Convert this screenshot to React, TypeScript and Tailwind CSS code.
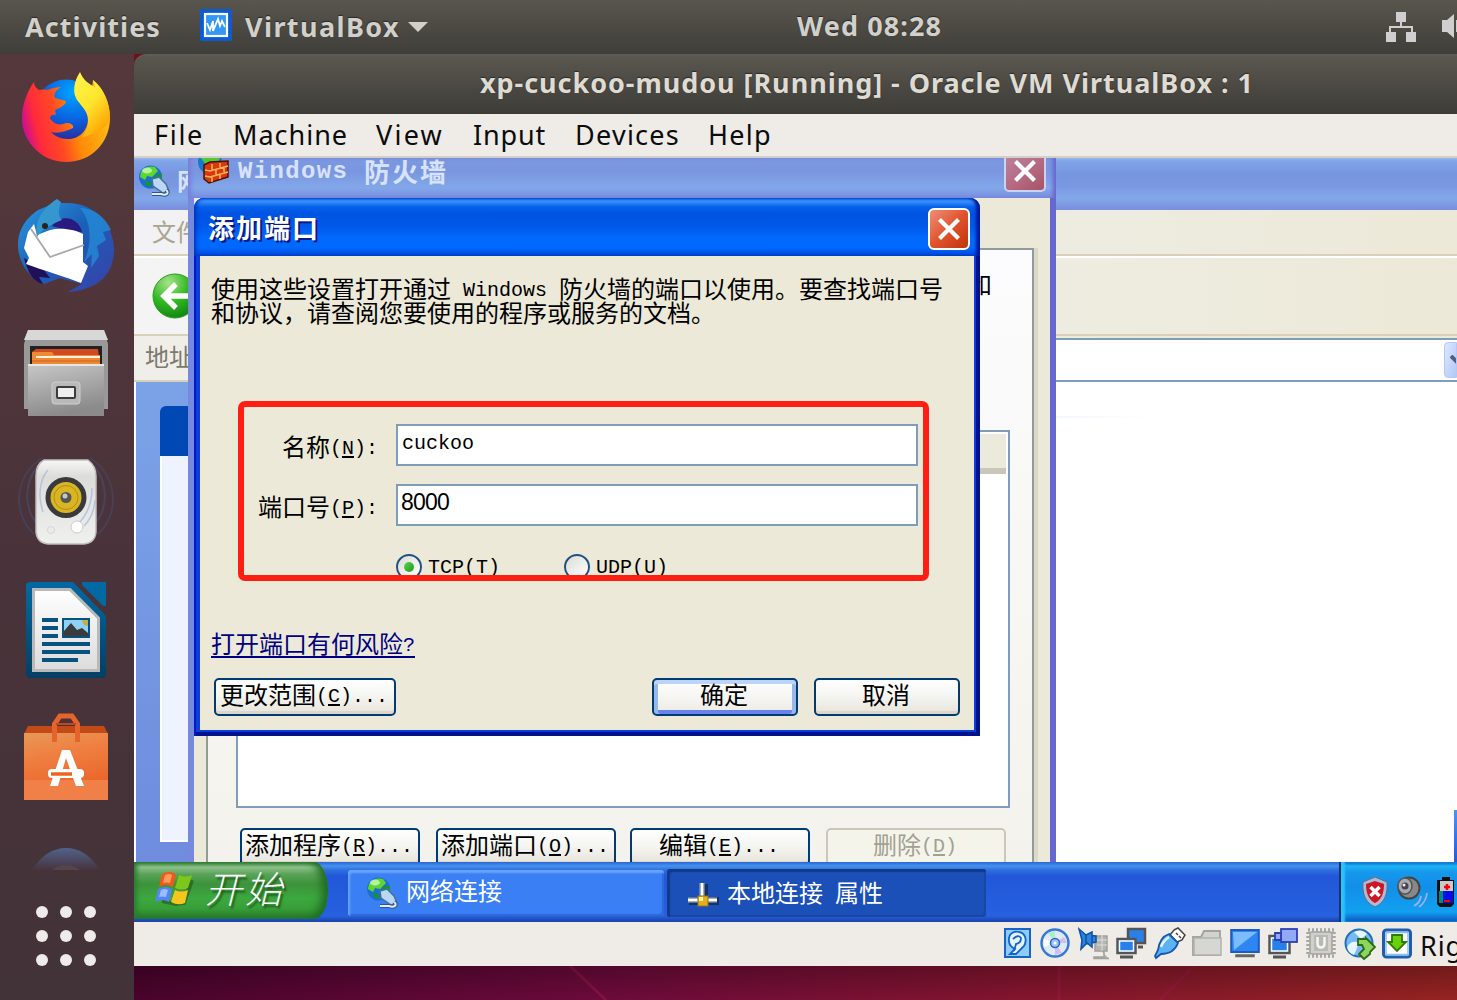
import { useLayoutEffect, useRef, useState, type ReactNode } from "react";

/* Text whose tracking is adjusted so that it spans a given width. */
function Fit({ width, children, className = "" }: { width: number; children: string; className?: string }) {
  const ref = useRef<HTMLSpanElement>(null);
  const [spacing, setSpacing] = useState(0);
  useLayoutEffect(() => {
    if (ref.current) {
      const natural = ref.current.getBoundingClientRect().width;
      setSpacing((width - natural) / children.length);
    }
  }, []);
  return (
    <span ref={ref} style={{ letterSpacing: spacing }} className={"inline-block whitespace-pre " + className}>
      {children}
    </span>
  );
}

/* Guest text: 24px ideographs with 12px wide Latin cells. "_X" marks a mnemonic. */
function Xp({ children, className = "h-6" }: { children: string; className?: string }) {
  const parts = children.match(/_[A-Z]|[\x20-\x5e\x60-\x7e]+|[^\x20-\x7e]+/g) || [];
  return (
    <span className={"inline-block shrink-0 whitespace-pre font-['Noto_Sans_CJK_SC',sans-serif] text-[24px] leading-[24px] " + className}>
      {parts.map((p, i) =>
        p[0] === "_" ? (
          <u key={i} className="align-[2px] font-['Liberation_Mono',monospace] text-[20px] leading-none decoration-2 underline-offset-2">
            {p[1]}
          </u>
        ) : p.charCodeAt(0) < 127 ? (
          <span key={i} className="align-[2px] font-['Liberation_Mono',monospace] text-[20px] leading-none">
            {p}
          </span>
        ) : (
          <span key={i}>{p}</span>
        ),
      )}
    </span>
  );
}

function XpButton({ children, className = "", kind = "normal" }: { children: string; className?: string; kind?: "normal" | "default" | "disabled" }) {
  const look =
    kind === "disabled"
      ? "border-[#c9c7ba] bg-[#f5f4ea] text-[#a1a192]"
      : kind === "default"
        ? "border-[#003c74] bg-gradient-to-b from-white to-[#ecebe5] text-black shadow-[inset_0_4px_0_#bcd4f6,inset_4px_0_0_#98b8ea,inset_-4px_0_0_#98b8ea,inset_0_-4px_0_#6982ee]"
        : "border-[#003c74] bg-gradient-to-b from-white via-[#f4f4f0] to-[#e6e3da] text-black shadow-[inset_0_-3px_0_#dcd6cb]";
  return (
    <button className={"flex h-[38px] shrink-0 items-center justify-center rounded-[5px] border-2 pb-[7px] pr-[2px] " + look + " " + className}>
      <Xp>{children}</Xp>
    </button>
  );
}

function CloseX() {
  return (
    <svg viewBox="0 0 22 22" className="size-[22px]">
      <path d="M1.5 1.5 20.5 20.5M20.5 1.5 1.5 20.5" stroke="white" strokeWidth="4.2" />
    </svg>
  );
}

function Firefox() {
  return (
    <svg viewBox="20 70 92 94" className="h-[94px] w-[92px]">
      <defs>
        <radialGradient id="ffGlobe" cx=".6" cy=".2" r=".9">
          <stop offset="0" stopColor="#00a4ff" />
          <stop offset=".5" stopColor="#0a62e0" />
          <stop offset="1" stopColor="#341586" />
        </radialGradient>
        <linearGradient id="ffBody" x1=".05" y1=".65" x2=".95" y2=".45">
          <stop offset="0" stopColor="#d2128a" />
          <stop offset=".14" stopColor="#ff2a3c" />
          <stop offset=".4" stopColor="#ff4a22" />
          <stop offset=".62" stopColor="#ff8a08" />
          <stop offset="1" stopColor="#ffb812" />
        </linearGradient>
        <linearGradient id="ffFlame" x1=".1" y1="0" x2=".7" y2="1">
          <stop offset="0" stopColor="#fff44f" />
          <stop offset=".5" stopColor="#ffe62e" />
          <stop offset="1" stopColor="#ffa000" />
        </linearGradient>
      </defs>
      <circle cx="66" cy="111" r="31.500" fill="url(#ffGlobe)" />
      <path d="M34 82C28 90 22 104 22 118C22 142 42 162 66 162C92 162 110 142 110 118C110 102 103 88 93 80L88 118C88 132 78 139 68 139C60 139 55 136 51 132C59 134 66 131 73 128C74 125 71 123 66 123C60 126 53 124 50 118C50 115 54 114 56 115L55 110C61 107 66 105 66 101L55 98C53 94 56 90 61 87C54 87 49 90 46 90C43 89 41 90 39 90C36 88 34 86 34 82Z" fill="url(#ffBody)" />
      <path d="M80 72C74 81 72 92 77 100C83 108 89 112 88 124C86 133 82 137 82 137C95 135 107 129 110 118C110 102 103 88 93 80L95 87C89 84 83 80 80 72Z" fill="url(#ffFlame)" />
    </svg>
  );
}

function Thunderbird() {
  return (
    <svg viewBox="16 198 100 98" className="h-[98px] w-[100px]">
      <defs>
        <linearGradient id="tb" x1="0" y1="0" x2="1" y2="1">
          <stop offset="0" stopColor="#2b9ae0" />
          <stop offset=".45" stopColor="#1b60b8" />
          <stop offset="1" stopColor="#3a3fa8" />
        </linearGradient>
      </defs>
      <path d="M38 210C56 202 60 203 66 203C92 202 114 222 114 250C114 274 98 290 68 292L82 284L60 278L44 284C30 278 18 264 18 244C18 230 26 218 38 210Z" fill="url(#tb)" />
      <path d="M24 258C28 274 34 282 43 284L39 277L50 278L44 270Z" fill="#1f1059" />
      <path d="M52 226C60 214 78 216 82 232L70 231Z" fill="#2a1a80" />
      <path d="M24 248L28 232L34 224L37 235L50 230C62 227 76 230 83 234L83 262L88 266L81 283C66 277 42 270 26 264L29 258Z" fill="#fff" />
      <path d="M31 229L50 257L84 245" fill="none" stroke="#a8a8a8" strokeWidth="1.800" />
      <path d="M37 237C35 222 40 210 57 199L61 202C58 210 58 216 62 220C52 224 42 229 37 237Z" fill="#3497cf" />
      <path d="M80 208C92 222 92 244 84 262L92 254L91 268L99 256L97 246L106 240L103 232L111 230C106 218 94 208 80 208Z" fill="#2492dc" opacity=".7" />
      <circle cx="45" cy="226" r="3" fill="#2b2218" />
    </svg>
  );
}

function Files() {
  return (
    <svg viewBox="22 328 88 92" className="h-[92px] w-[88px]">
      <defs>
        <linearGradient id="cab" x1="0" y1="0" x2=".3" y2="1">
          <stop offset="0" stopColor="#c8c8c8" />
          <stop offset="1" stopColor="#8b8b8b" />
        </linearGradient>
      </defs>
      <path d="M28 330H104L108 344V409H24V344Z" fill="#999" />
      <path d="M28 330H104L108 340H24Z" fill="#d8d8d8" />
      <path d="M30 346H102V366H30Z" fill="#222" />
      <path d="M36 349H98L100 366H32V352Z" fill="#cf4a22" />
      <path d="M32 352H52L54 355H100V364H32Z" fill="#ec8a35" />
      <path d="M36 357H100" stroke="#fdf0dd" strokeWidth="2" />
      <path d="M32 361H100" stroke="#d06020" strokeWidth="1" />
      <path d="M28 364H104V416H28Z" fill="url(#cab)" />
      <path d="M28 365H104" stroke="#e6e6e6" strokeWidth="2" />
      <rect x="52" y="382" width="28" height="22" rx="3" fill="#b9b9b9" stroke="#cfcfcf" />
      <rect x="57" y="387" width="18" height="11" rx="1" fill="#eee" stroke="#3c3c3c" strokeWidth="2" />
    </svg>
  );
}

function Speaker() {
  return (
    <svg viewBox="16 456 100 92" className="h-[92px] w-[100px]">
      <defs>
        <linearGradient id="spk" x1="0" y1="0" x2="0" y2="1">
          <stop offset="0" stopColor="#f7f7f6" />
          <stop offset=".2" stopColor="#dcdcda" />
          <stop offset="1" stopColor="#f0f0ee" />
        </linearGradient>
      </defs>
      <g fill="none" stroke="#485075" strokeWidth="2">
        <path d="M42 458C14 476 12 514 34 534M90 458C118 476 120 514 98 534" opacity=".45" />
        <path d="M38 466C24 482 24 508 36 522M94 466C108 482 108 508 96 522" opacity=".6" />
      </g>
      <path d="M44 460H88Q96 466 96 476V532Q95 543 84 544H48Q37 543 36 532V476Q36 464 44 460Z" fill="url(#spk)" stroke="#bdbdba" strokeWidth="1.500" />
      <circle cx="66" cy="497.500" r="18" fill="#d9b524" stroke="#383a3b" strokeWidth="5" />
      <circle cx="66" cy="497.500" r="12" fill="none" stroke="#b28e14" />
      <circle cx="66" cy="497.500" r="5.500" fill="#555" />
      <circle cx="65" cy="496" r="2.500" fill="#c6c6c6" />
      <g fill="none" stroke="#a9bcdc" strokeWidth="1.500" opacity=".8">
        <path d="M48 470C39 480 38 498 43 512M92 488C92 504 86 516 78 524M95 500C94 512 90 520 84 526" />
      </g>
      <circle cx="77" cy="527" r="6" fill="#fff" stroke="#ccc" />
      <circle cx="51" cy="530" r="3.500" fill="none" stroke="#d5d5d2" />
    </svg>
  );
}

function Writer() {
  return (
    <svg viewBox="24 580 84 100" className="h-[100px] w-[84px]">
      <defs>
        <linearGradient id="wr" x1="0" y1="0" x2="0" y2="1">
          <stop offset="0" stopColor="#0369a3" />
          <stop offset="1" stopColor="#033f63" />
        </linearGradient>
        <linearGradient id="wp" x1="0" y1="0" x2="0" y2="1">
          <stop offset="0" stopColor="#fff" />
          <stop offset="1" stopColor="#dcdcdc" />
        </linearGradient>
      </defs>
      <path d="M30 582H73L106 616V674Q106 678 102 678H30Q26 678 26 674V586Q26 582 30 582Z" fill="url(#wr)" />
      <path d="M82 582H106V606H103L82 585Z" fill="#0369a3" />
      <path d="M33.500 589.500H70L98.500 618V670.500H33.500Z" fill="url(#wp)" stroke="#b9b9b9" strokeWidth="3" />
      <path d="M42 620H58M42 628H58M42 636H58M42 644H90M42 652H90M42 660H78" stroke="#07527f" strokeWidth="4" />
      <rect x="63" y="619" width="26" height="18" fill="#8fd0f5" stroke="#07527f" strokeWidth="2" />
      <path d="M82 620H88V626Q83 626 82 620Z" fill="#c9ad3e" />
      <path d="M64 636V631L71 623L77 630L82 628L88 633V636Z" fill="#3b3b3b" />
    </svg>
  );
}

function Software() {
  return (
    <svg viewBox="22 712 88 92" className="h-[92px] w-[88px]">
      <defs>
        <linearGradient id="bag" x1="0" y1="0" x2=".25" y2="1">
          <stop offset="0" stopColor="#e5995a" />
          <stop offset=".35" stopColor="#ef8142" />
          <stop offset="1" stopColor="#ea6026" />
        </linearGradient>
      </defs>
      <path d="M28 726H104L108 734H24Z" fill="#c24a17" />
      <path d="M24 733H108V800H24Z" fill="url(#bag)" />
      <path d="M24 780H108V800H24Z" fill="#f07f48" />
      <path d="M54.500 742V724L60 716H72L77.500 724V742" fill="none" stroke="#e4642c" strokeWidth="5" />
      <path d="M56 724H76" stroke="#c24a17" strokeWidth="2" />
      <path d="M50 786L62 750H70L84 786H76L66 758L58 786Z" fill="#fff" />
      <rect x="48" y="769" width="36" height="9" rx="4" fill="#fff" />
      <path d="M51 774H72" stroke="#ed6420" strokeWidth="3.500" />
    </svg>
  );
}

function Globe({ className = "" }: { className?: string }) {
  return (
    <svg viewBox="0 0 32 32" className={"size-8 shrink-0 " + className}>
      <circle cx="12.500" cy="12" r="11.500" fill="#1c6fd0" />
      <path d="M3 7Q9 0 17 2L20 6L14 12L9 11L7 15L2 12Z" fill="#5fd62f" />
      <path d="M17 10L24 9L23 17L16 16ZM8 16L13 18L13 22L7 19Z" fill="#129a1e" />
      <ellipse cx="9" cy="5.500" rx="5" ry="3" fill="#d9ffc4" opacity=".7" />
      <path d="M14 14L21 12L28 19L31 26L25 28L15 21Z" fill="#b8d8f4" stroke="#486f9c" strokeWidth="1.500" />
      <path d="M28 25C32 28 28 31 23 29L14 29" fill="none" stroke="#33547c" strokeWidth="4" />
      <path d="M28 25C32 28 28 31 23 29L14 29" fill="none" stroke="#dcecff" strokeWidth="2" />
    </svg>
  );
}

function Firewall() {
  return (
    <svg viewBox="0 0 32 28" className="h-7 w-8 shrink-0">
      <circle cx="12" cy="4" r="12" fill="#1a78cc" />
      <path d="M3 0H22L19 6L8 7Z" fill="#52c932" />
      <path d="M6 7L12 4L30 3V19L11 25L6 21Z" fill="#d8380e" stroke="#4b1206" strokeWidth="1.500" />
      <path d="M7 12L12 13L30 8M7 18L12 19L30 14M14 6V13M22 5V10M18 12V17M26 9V14M14 18V24M22 16V21" fill="none" stroke="#ffb35a" strokeWidth="1.500" />
    </svg>
  );
}

function WinFlag() {
  return (
    <svg viewBox="0 0 40 38" className="h-[38px] w-10 shrink-0">
      <path d="M8 31L22 34L30 33L38 10" fill="none" stroke="#204a1b" strokeWidth="4" opacity=".55" />
      <path d="M8 4Q15 0 22 4L19 17Q12 13 5 17Z" fill="#f0591c" />
      <path d="M25 5Q31 8 38 5L34 18Q28 21 21 18Z" fill="#7ec61a" />
      <path d="M4 19Q11 15 18 19L15 32Q8 28 1 32Z" fill="#5485f2" />
      <path d="M21 20Q27 23 34 20L31 33Q24 36 17 32Z" fill="#f7c51c" />
      <path d="M11 5Q15 3 18 5L16 13Q12 12 9 13Z" fill="#ff9a58" />
      <path d="M7 20Q11 18 14 20L12 27Q8 26 5 27Z" fill="#9dbcff" />
    </svg>
  );
}

/* Status bar indicator icons */
const indicators: ReactNode[] = [
  <g transform="translate(2 0)">
    <rect x="1" y="2" width="25" height="28" fill="#8ecbff" stroke="#1664c4" strokeWidth="2" />
    <path d="M5 14C4 5 12 4 15 5C22 6 23 14 20 19L12 27H6L11 22C7 20 5 18 5 14Z" fill="#e4f3ff" stroke="#1664c4" strokeWidth="1.800" />
    <path d="M9 12Q14 7 17 11Q17 16 12 17L10 24" fill="none" stroke="#1664c4" strokeWidth="1.800" />
  </g>,
  <>
    <circle cx="15" cy="16" r="13.500" fill="#dfe9fb" stroke="#3579d0" strokeWidth="2.400" />
    <path d="M15 16L8 6L15 4Z" fill="#a8f0c8" />
    <path d="M15 16L22 26L15 28ZM15 16L24 10L27 16Z" fill="#d3bcf5" />
    <path d="M15 16L4 12L4 20Z" fill="#fff" />
    <circle cx="15" cy="16" r="4.500" fill="#9cc6f5" stroke="#2a66bb" strokeWidth="1.500" />
    <circle cx="15" cy="16" r="1.500" fill="#fff" />
  </>,
  <>
    <path d="M17 9H29V24H17ZM23 24H26V30H16V31.500H31" fill="#b4b4b2" stroke="#a0a09d" strokeWidth="1.500" />
    <path d="M19 13H29M19 18H29M24 8V24" stroke="#dedede" strokeWidth="1" />
    <path d="M1 2L8 8L18 9V15L8 17L3 22L4 13Z" fill="#2f83dd" stroke="#0f55a6" strokeWidth="1.600" />
    <path d="M14 5V20L8 15V8Z" fill="#2f83dd" stroke="#0f55a6" strokeWidth="1.600" />
  </>,
  <>
    <rect x="12" y="2" width="17" height="14" fill="#2a80ea" stroke="#555" strokeWidth="2.500" />
    <path d="M22 20H27M4 30H17" stroke="#555" strokeWidth="3" />
    <rect x="1.500" y="12" width="18" height="14" fill="#2a80ea" stroke="#555" strokeWidth="2.500" />
    <rect x="3.500" y="14" width="14" height="10" fill="none" stroke="#fff" strokeWidth="1.500" />
  </>,
  <>
    <path d="M20 3L24 1L31 8L28 13L23 15L16 8Z" fill="#fff" stroke="#444" strokeWidth="1.500" />
    <path d="M22 6L24 8M25 9L27 11" stroke="#444" strokeWidth="1.500" />
    <path d="M15 7L24 16C21 24 14 27 7 27L2 31L1 29L4 23C5 15 9 9 15 7Z" fill="#5bb3f4" stroke="#1556ad" strokeWidth="1.800" />
    <path d="M7 20Q9 14 15 10" fill="none" stroke="#e6f6ff" strokeWidth="2.500" />
  </>,
  <>
    <path d="M1 10H9L12 4H28V28H1Z" fill="#d2d2cf" stroke="#a2a29e" strokeWidth="1.800" />
    <path d="M2 11H29V28H2Z" fill="#d6d6d3" stroke="#b1b1ad" strokeWidth="1.500" />
  </>,
  <>
    <rect x="1.200" y="3" width="27.600" height="22" fill="#2e86f2" stroke="#1b5cbc" strokeWidth="2" />
    <path d="M3 5H27L4 23Z" fill="#7bbcff" />
    <path d="M6 28H24V29.500H6Z" fill="#fff" stroke="#666" strokeWidth="1.500" />
  </>,
  <>
    <rect x="1.500" y="9" width="20" height="17" fill="#2a80ea" stroke="#555" strokeWidth="2.500" />
    <path d="M5 30H18" stroke="#555" strokeWidth="3" />
    <rect x="3.500" y="11" width="16" height="13" fill="none" stroke="#fff" strokeWidth="1.500" />
    <rect x="13" y="2" width="16" height="13" fill="#90aaf6" stroke="#2e3fb4" strokeWidth="1.800" />
    <path d="M7 6H13V13H7Z" fill="#90aaf6" stroke="#2e3fb4" strokeWidth="1.800" />
  </>,
  <>
    <rect x="2" y="3" width="26" height="26" fill="none" stroke="#a7a7a3" strokeWidth="3.500" strokeDasharray="2 2" />
    <rect x="4" y="5" width="22" height="22" rx="2" fill="#cfcfcc" stroke="#a2a29e" strokeWidth="1.500" />
    <rect x="8" y="8" width="14" height="16" fill="#b8b8b4" />
    <path d="M11.500 10V16Q11.500 20.500 15 20.500T18.500 16V10" fill="none" stroke="#f5f5f2" strokeWidth="2.500" />
  </>,
  <>
    <circle cx="15" cy="16" r="13.500" fill="#77b9f5" stroke="#2070b4" strokeWidth="2" />
    <path d="M3 20Q8 12 15 16Q12 24 10 28Q4 26 3 20ZM10 5Q18 1 23 7L17 12Z" fill="#e6f5ff" />
    <path d="M14 12H22V11L31 20L26 25V27L20 32L15 27L20 22L18 18H14Z" fill="#8fd45c" stroke="#276c14" strokeWidth="1.800" />
  </>,
  <>
    <rect x="1.500" y="3" width="27" height="27" rx="3" fill="#fff" stroke="#1c5fae" strokeWidth="3" />
    <rect x="4" y="5.500" width="22" height="22" fill="none" stroke="#8cbdf0" strokeWidth="1.500" />
    <path d="M10 8H20V15H24L15 24L6 15H10Z" fill="#69d00b" stroke="#2d7a05" strokeWidth="1.800" />
  </>,
];

function Dock() {
  return (
    <aside className="relative flex w-[134px] shrink-0 flex-col items-center overflow-hidden bg-gradient-to-b from-[#55383b] via-[#4a333a] to-[#423338] pr-[2px]">
      <div className="mt-4"><Firefox /></div>
      <div className="mt-[34px]"><Thunderbird /></div>
      <div className="mt-8"><Files /></div>
      <div className="mt-9"><Speaker /></div>
      <div className="mt-8"><Writer /></div>
      <div className="mt-8"><Software /></div>
      <svg viewBox="32 846 68 26" className="mt-[42px] h-[26px] w-[68px]">
        <defs>
          <linearGradient id="arc" x1="0" y1="0" x2="0" y2="1">
            <stop offset="0" stopColor="#52628a" />
            <stop offset="1" stopColor="#46343d" />
          </linearGradient>
        </defs>
        <path d="M32 870Q46 848 66 848T100 870Z" fill="url(#arc)" />
        <path d="M52 870Q66 860 80 870Z" fill="#57434a" />
      </svg>
      <div className="mt-[34px] grid grid-cols-3 gap-3">
        {Array.from({ length: 9 }, (_, i) => (
          <i key={i} className="size-3 rounded-full bg-[#eeecea]" />
        ))}
      </div>
    </aside>
  );
}

function Explorer() {
  return (
    <div className="flex h-full flex-col bg-white">
      <div className="flex h-[52px] shrink-0 items-start bg-[linear-gradient(#9cb6ec_0,#7fa5e8_3px,#7895e0_16px,#7a97e2_28px,#82a8e9_40px,#7a8fe0_51px)] pl-1 pt-[7px]">
        <Globe />
        <Xp className="ml-[7px] mt-[3px] h-6 font-bold text-[#d7e3fb]">网络连接</Xp>
      </div>
      <div className="flex h-[46px] shrink-0 items-center border-b-2 border-[#d8d0ba] bg-gradient-to-r from-[#f2f2f5] to-[#ece9d8] pb-[3px] pl-[18px]">
        <Xp className="h-6 text-[#a9a590]">文件</Xp>
      </div>
      <div className="flex h-20 shrink-0 items-center border-y-2 border-b-[#d8d0ba] border-t-white bg-gradient-to-r from-[#f4f4f4] to-[#ece9d8] pl-[18px]">
        <svg viewBox="0 0 46 46" className="size-[46px]">
          <defs>
            <radialGradient id="back" cx=".35" cy=".2" r=".9">
              <stop offset="0" stopColor="#a5e38a" />
              <stop offset=".5" stopColor="#32b822" />
              <stop offset="1" stopColor="#0c7c0e" />
            </radialGradient>
          </defs>
          <circle cx="23" cy="23" r="22" fill="url(#back)" stroke="#2b9a25" />
          <path d="M24 11L12 23L24 35M13 23H38" fill="none" stroke="#fff" strokeWidth="5.500" />
        </svg>
      </div>
      <div className="flex h-[46px] shrink-0 border-b-2 border-[#d8d0ba] bg-gradient-to-r from-[#efeee8] to-[#ece9d8]">
        <Xp className="ml-[11px] mt-2 h-6 w-[100px] text-[#7c796e]">地址</Xp>
        <div className="mt-[2px] flex h-11 flex-1 items-center justify-end border-y-2 border-[#7f9db9] bg-white">
          <div className="flex h-9 w-[13px] items-center overflow-hidden rounded-l border border-[#b5c8f5] bg-gradient-to-br from-[#dde7fd] to-[#b3c8f8]">
            <svg viewBox="0 0 14 10" className="ml-[5px] h-[10px] w-[14px] shrink-0">
              <path d="M1 1L7 7L13 1" fill="none" stroke="#4d6185" strokeWidth="4" />
            </svg>
          </div>
        </div>
      </div>
      <div className="flex min-h-0 flex-1 items-stretch">
        <div className="flex w-[300px] shrink-0 flex-col border-l-2 border-white bg-gradient-to-b from-[#7ba2e7] to-[#6f8cde] pl-6 pt-6">
          <div className="h-[50px] shrink-0 rounded-tl-[6px] bg-[#0048b4]" />
          <div className="h-[386px] border-2 border-t-0 border-white bg-[#eff3ff]" />
        </div>
        <div className="flex flex-1 flex-col pt-[34px]">
          <div className="h-[2px] w-[716px] bg-gradient-to-r from-[#d6e5fb] via-[#e2ecfd] via-70% to-white" />
        </div>
        <div className="mt-[428px] w-[3px] bg-gradient-to-b from-[#4b95f5] to-[#225ad9]" />
      </div>
    </div>
  );
}

function FirewallWindow() {
  return (
    <div className="absolute left-[54px] top-0 flex h-full w-[868px] flex-col">
      <div className="flex h-10 shrink-0 items-start bg-[linear-gradient(#7c98e0_0,#7a96e0_14px,#82a8e9_30px,#7a8fe0_39px)] pl-[10px] shadow-[inset_5px_0_4px_-2px_#7a7edc,inset_-5px_0_4px_-2px_#6a62cc]">
        <Firewall />
        <div className="ml-2 flex items-center font-bold leading-[24px] text-[#d7e3fb]">
          <Fit width={126} className="pt-[2px] font-['Liberation_Mono',monospace] text-[24px]">{"Windows "}</Fit>
          <Fit width={84} className="font-['Noto_Sans_CJK_SC',sans-serif] text-[26px]">防火墙</Fit>
        </div>
        <div className="ml-auto mr-[10px] flex h-[34px] w-[42px] justify-center rounded-b-[5px] border-2 border-t-0 border-[#cbd2f2] bg-gradient-to-br from-[#b88299] via-[#b66a82] to-[#a85465] pt-[2px]">
          <CloseX />
        </div>
      </div>
      <div className="flex flex-1 border-x-[6px] border-l-[#7689dc] border-r-[#6569cf] bg-[#ece9d8] pl-3 pr-4 pt-[50px]">
        <div className="relative flex w-[828px] shrink-0 flex-col border-2 border-b-0 border-[#919b9c] bg-gradient-to-b from-[#fcfcfe] to-[#f3f2ec] pl-7 pr-[22px] shadow-[4px_0_0_#dcd9c8]">
          <div className="flex h-[180px] justify-end pt-[22px]">
            <Xp className="mr-[18px] h-6">和</Xp>
          </div>
          <div className="h-[378px] border-2 border-[#7f9db9] bg-white p-[2px]">
            <div className="h-10 border-b-[6px] border-[#cbc7b8] bg-[#ebeadb]" />
          </div>
          <div className="-mr-2 mt-5 flex pl-1">
            <XpButton className="w-[180px]">添加程序(_R)...</XpButton>
            <XpButton className="ml-4 w-[180px]">添加端口(_O)...</XpButton>
            <XpButton className="ml-[14px] w-[180px]">编辑(_E)...</XpButton>
            <XpButton className="ml-4 w-[180px]" kind="disabled">删除(_D)</XpButton>
          </div>
        </div>
      </div>
    </div>
  );
}

function Radio({ on = false, label }: { on?: boolean; label: string }) {
  return (
    <label className="flex h-[26px] w-[168px] items-center">
      <span className="flex size-[26px] items-center justify-center rounded-full border-2 border-[#1c5180] bg-gradient-to-br from-[#dcdcd7] to-white">
        {on && <i className="size-[10px] rounded-full bg-gradient-to-br from-[#55d551] to-[#1c9a1a]" />}
      </span>
      <Xp className="-mt-1 ml-[6px] h-6">{label}</Xp>
    </label>
  );
}

function PortDialog() {
  return (
    <div className="absolute left-[60px] top-10 flex h-[538px] w-[786px] flex-col rounded-t-[10px] bg-[#0a3fd8] shadow-[inset_2px_0_0_#0019cf,inset_-4px_-4px_0_#00138c]">
      <div className="flex h-[58px] shrink-0 items-center justify-between rounded-t-[10px] bg-[linear-gradient(#0855dd_0,#3a93ff_3px,#2a83fa_5px,#0560ea_9px,#0053e1_16px,#0058ea_28px,#0069fc_40px,#0068ff_50px,#0048d8_57px)] pl-[14px] pr-[10px] pt-[3px] shadow-[inset_4px_0_4px_-2px_#0030b8,inset_-5px_0_3px_-1px_#001ba0]">
        <Fit width={112} className="mb-1 font-['Noto_Sans_CJK_SC',sans-serif] text-[26px] font-bold leading-[30px] text-white [text-shadow:2px_2px_0_#0a1883]">添加端口</Fit>
        <div className="flex size-[42px] items-center justify-center rounded-[6px] border-2 border-white bg-gradient-to-br from-[#ec8f77] via-[#e0522c] to-[#c13505]">
          <CloseX />
        </div>
      </div>
      <div className="mx-[6px] mb-[6px] flex flex-1 flex-col bg-[#ece9d8] pl-3">
        <p className="-ml-px mt-5 flex flex-col pb-px">
          <Xp>使用这些设置打开通过 Windows 防火墙的端口以使用。要查找端口号</Xp>
          <Xp>和协议，请查阅您要使用的程序或服务的文档。</Xp>
        </p>
        <div className="ml-[26px] mt-[76px] flex h-[180px] w-[691px] shrink-0 flex-col overflow-hidden rounded-[7px] border-[6px] border-[#ff1f12] pr-[5px] pt-[17px]">
          <div className="flex h-[42px] shrink-0 items-center justify-end">
            <Xp className="mr-[18px] mt-px h-6">名称(_N):</Xp>
            <div className="h-[42px] w-[522px] border-2 border-[#7f9db9] bg-white pl-1 pt-[3px]">
              <Xp>cuckoo</Xp>
            </div>
          </div>
          <div className="mt-[18px] flex h-[42px] shrink-0 items-center justify-end">
            <Xp className="mr-[18px] mt-px h-6">端口号(_P):</Xp>
            <div className="h-[42px] w-[522px] border-2 border-[#7f9db9] bg-white pl-[3px] pt-[3px]">
              <Fit width={48} className="font-['Liberation_Sans',sans-serif] text-[23px] leading-[26px]">8000</Fit>
            </div>
          </div>
          <div className="ml-[152px] mt-7 flex">
            <Radio on label="TCP(T)" />
            <Radio label="UDP(U)" />
          </div>
        </div>
        <a className="-ml-px mt-[50px] flex text-[#000080]">
          <Xp className="h-[27px] border-b-2 border-[#000080]">打开端口有何风险?</Xp>
        </a>
        <div className="mt-5 flex pl-[2px] pr-[14px]">
          <XpButton className="w-[182px]">更改范围(_C)...</XpButton>
          <XpButton className="ml-auto w-[146px]" kind="default">确定</XpButton>
          <XpButton className="ml-4 w-[146px]">取消</XpButton>
        </div>
      </div>
    </div>
  );
}

function Taskbar() {
  return (
    <div className="flex h-[60px] shrink-0 bg-[linear-gradient(#2a66d4_0,#4692ee_4px,#2f6fe0_8px,#2157d8_14px,#245cdc_34px,#2661e0_54px,#1c45b0_59px)]">
      <div className="flex h-[57px] w-[194px] shrink-0 items-center rounded-r-[14px_28px] bg-[linear-gradient(#3a8a3c_0,#93c490_5px,#5aa458_12px,#3c933a_22px,#3ca83e_36px,#389f39_46px,#287c2a_56px)] pb-[3px] pl-5 shadow-[inset_-8px_0_8px_-2px_#1f6c22,inset_3px_0_4px_#2c7d35]">
        <WinFlag />
        <Fit width={80} className="mb-[5px] ml-[11px] font-['Noto_Sans_CJK_SC',sans-serif] text-[37px] font-light italic leading-[50px] text-white [text-shadow:2px_3px_2px_#1d5c1d]">开始</Fit>
      </div>
      <div className="ml-5 mt-2 flex h-[46px] w-[316px] shrink-0 items-center rounded-[3px] bg-[#3a80f4] pl-[18px] shadow-[inset_2px_3px_2px_#67a3ff,inset_-2px_-2px_1px_#2d68dc]">
        <Globe />
        <Xp className="-mt-[6px] ml-2 h-6 text-white">网络连接</Xp>
      </div>
      <div className="ml-[3px] mt-[7px] flex h-12 w-[319px] shrink-0 items-center rounded-[3px] bg-[#1b50b8] pl-5 shadow-[inset_3px_3px_1px_#123a8a,inset_-2px_-2px_1px_#1947a4]">
        <svg viewBox="0 0 34 28" className="mt-1 h-7 w-[34px]">
          <path d="M17 3V20M2 20H32" stroke="#111" strokeWidth="8" opacity=".5" />
          <path d="M15 2V18M1 19H30" stroke="#a5b2bd" strokeWidth="5" />
          <path d="M15 2V18M1 19H30" stroke="#fff" strokeWidth="2" />
          <rect x="11" y="15" width="10" height="10" fill="#e0b11c" stroke="#9b7412" />
          <rect x="12" y="16" width="4" height="4" fill="#fff4a0" />
        </svg>
        <Xp className="-mt-[2px] ml-[6px] h-6 text-white">本地连接 属性</Xp>
      </div>
      <div className="ml-auto flex w-[118px] items-center overflow-hidden border-l-2 border-[#12306a] bg-[linear-gradient(#0c5cc4_0,#1cb4f5_4px,#1698ec_10px,#128fe8_24px,#12a0f0_50px,#0c5cc4_59px)] pl-[21px] shadow-[inset_4px_0_2px_#27c5f8]">
        <svg viewBox="0 0 26 30" className="h-[30px] w-[26px] shrink-0">
          <path d="M13 0L25 5C26 18 22 26 13 30C4 26 0 18 1 5Z" fill="#aabbd2" stroke="#5a6f92" />
          <path d="M13 4L22 7C22 17 19 23 13 26C7 23 4 17 4 7Z" fill="#cf1524" />
          <path d="M8.500 10L17.500 19M17.500 10L8.500 19" stroke="#fff" strokeWidth="3.500" />
        </svg>
        <svg viewBox="0 0 32 32" className="ml-[8px] size-8 shrink-0">
          <circle cx="13" cy="12" r="10.500" fill="#888" stroke="#444" strokeWidth="2" />
          <ellipse cx="9" cy="10" rx="7" ry="8" fill="#aaa" stroke="#555" strokeWidth="1.500" />
          <circle cx="9" cy="10" r="3.500" fill="#445" />
          <circle cx="8" cy="9" r="1.500" fill="#eee" />
          <path d="M18 30Q24 27 25 20M23 31Q30 26 31 17" fill="none" stroke="#99b0f4" strokeWidth="1.800" />
        </svg>
        <svg viewBox="0 0 20 30" className="ml-2 h-[30px] w-5 shrink-0">
          <path d="M6 0H14V3H18V27L15 30H4L1 27V3H6Z" fill="#111" />
          <path d="M4 4H17V14H4Z" fill="#c9c9c9" />
          <path d="M3 14H17V26H3Z" fill="#0010e8" />
          <path d="M3 14H7V26H3Z" fill="#008a80" />
          <path d="M11 7V13M8 10H14" stroke="#f00" strokeWidth="2.500" />
          <path d="M8 24H14" stroke="#f00" strokeWidth="2" />
        </svg>
      </div>
    </div>
  );
}

export default function App() {
  return (
    <div className="flex h-[1000px] w-[1457px] flex-col overflow-hidden bg-[#3d0225] font-['Noto_Sans',sans-serif]">
      <header className="relative flex h-[54px] shrink-0 items-center bg-gradient-to-b from-[#59564d] to-[#3f3e39] text-[27px] font-bold text-[#d2d0cb] [text-shadow:0_-1px_1px_#282825]">
        <Fit width={136} className="ml-[25px]">Activities</Fit>
        <svg viewBox="0 0 32 32" className="mb-1 ml-[39px] size-8">
          <rect x="0" y="0" width="32" height="32" rx="2" fill="#0b5cd2" />
          <rect x="5" y="5" width="22" height="22" fill="#3397f5" stroke="#fff" strokeWidth="2.200" />
          <path d="M7 14L10 21L13 12V22L18 10L20 17L22 12L25 18" fill="none" stroke="#fff" strokeWidth="1.800" />
        </svg>
        <Fit width={155} className="ml-[13px]">VirtualBox</Fit>
        <svg viewBox="0 0 20 10" className="ml-2 h-[10px] w-5">
          <path d="M0 0H20L10 10Z" fill="#d2d0cb" />
        </svg>
        <div className="absolute left-[797px] top-[6px]">
          <Fit width={145}>Wed 08:28</Fit>
        </div>
        <svg viewBox="0 0 30 30" className="ml-auto size-[30px]" fill="#cfcfcf">
          <path d="M10 0H20V10H16V14H27V20H30V30H20V20H25V16H5V20H10V30H0V20H3V14H14V10H10Z" />
        </svg>
        <svg viewBox="0 0 15 24" className="mb-[2px] ml-[26px] h-6 w-[15px]" fill="#cfcfcf">
          <path d="M0 6H5L12 0V24L5 18H0ZM14 6H15V18H14Z" />
        </svg>
      </header>
      <div className="flex min-h-0 flex-1">
        <Dock />
        <main className="flex min-w-0 flex-1 flex-col bg-[#6f1020]">
          <div className="relative flex h-[60px] shrink-0 items-center rounded-tl-[12px] border-t-2 border-[#5f5c55] bg-gradient-to-b from-[#5a574f] to-[#3d3c37] pb-1 text-[27px] font-bold text-[#dfdbd2] [text-shadow:0_-1px_1px_#282825]">
            <Fit width={774} className="ml-[346px]">xp-cuckoo-mudou [Running] - Oracle VM VirtualBox : 1</Fit>
          </div>
          <nav className="flex h-11 shrink-0 items-center border-b-2 border-[#d3cfc8] bg-[#efebe7] text-[27px] text-[#0c0c0c]">
            <Fit width={50} className="ml-5">File</Fit>
            <Fit width={115} className="ml-[29px]">Machine</Fit>
            <Fit width={68} className="ml-[28px]">View</Fit>
            <Fit width={73} className="ml-[29px]">Input</Fit>
            <Fit width={105} className="ml-[29px]">Devices</Fit>
            <Fit width={64} className="ml-[28px]">Help</Fit>
          </nav>
          <section className="relative h-[704px] shrink-0 overflow-hidden">
            <Explorer />
            <FirewallWindow />
            <PortDialog />
          </section>
          <Taskbar />
          <div className="flex h-11 shrink-0 items-center overflow-hidden bg-[#efebe7] pl-[868px]">
            {indicators.map((icon, i) => (
              <svg key={i} viewBox="0 0 32 34" className="mr-[6px] h-[34px] w-8 shrink-0">
                {icon}
              </svg>
            ))}
            <Fit width={128} className="shrink-0 pt-1 text-[27px] text-[#0c0c0c]">Right Ctrl</Fit>
          </div>
          <svg viewBox="0 0 1323 34" className="h-[34px] w-full">
            <defs>
              <linearGradient id="wall" x1="0" y1="0" x2="1" y2="0">
                <stop offset="0" stopColor="#4a032c" />
                <stop offset=".35" stopColor="#6c0a3b" />
                <stop offset=".65" stopColor="#82142f" />
                <stop offset="1" stopColor="#962322" />
              </linearGradient>
              <linearGradient id="wallShade" x1="0" y1="0" x2="0" y2="1">
                <stop offset="0" stopColor="#000" stopOpacity=".25" />
                <stop offset="1" stopColor="#000" stopOpacity="0" />
              </linearGradient>
            </defs>
            <rect width="1323" height="34" fill="url(#wall)" />
            <path d="M436 0L472 34M925 0V34M1060 0L1026 34" stroke="#9b1a45" strokeWidth="3" opacity=".5" />
            <rect width="1323" height="34" fill="url(#wallShade)" />
          </svg>
        </main>
      </div>
    </div>
  );
}
